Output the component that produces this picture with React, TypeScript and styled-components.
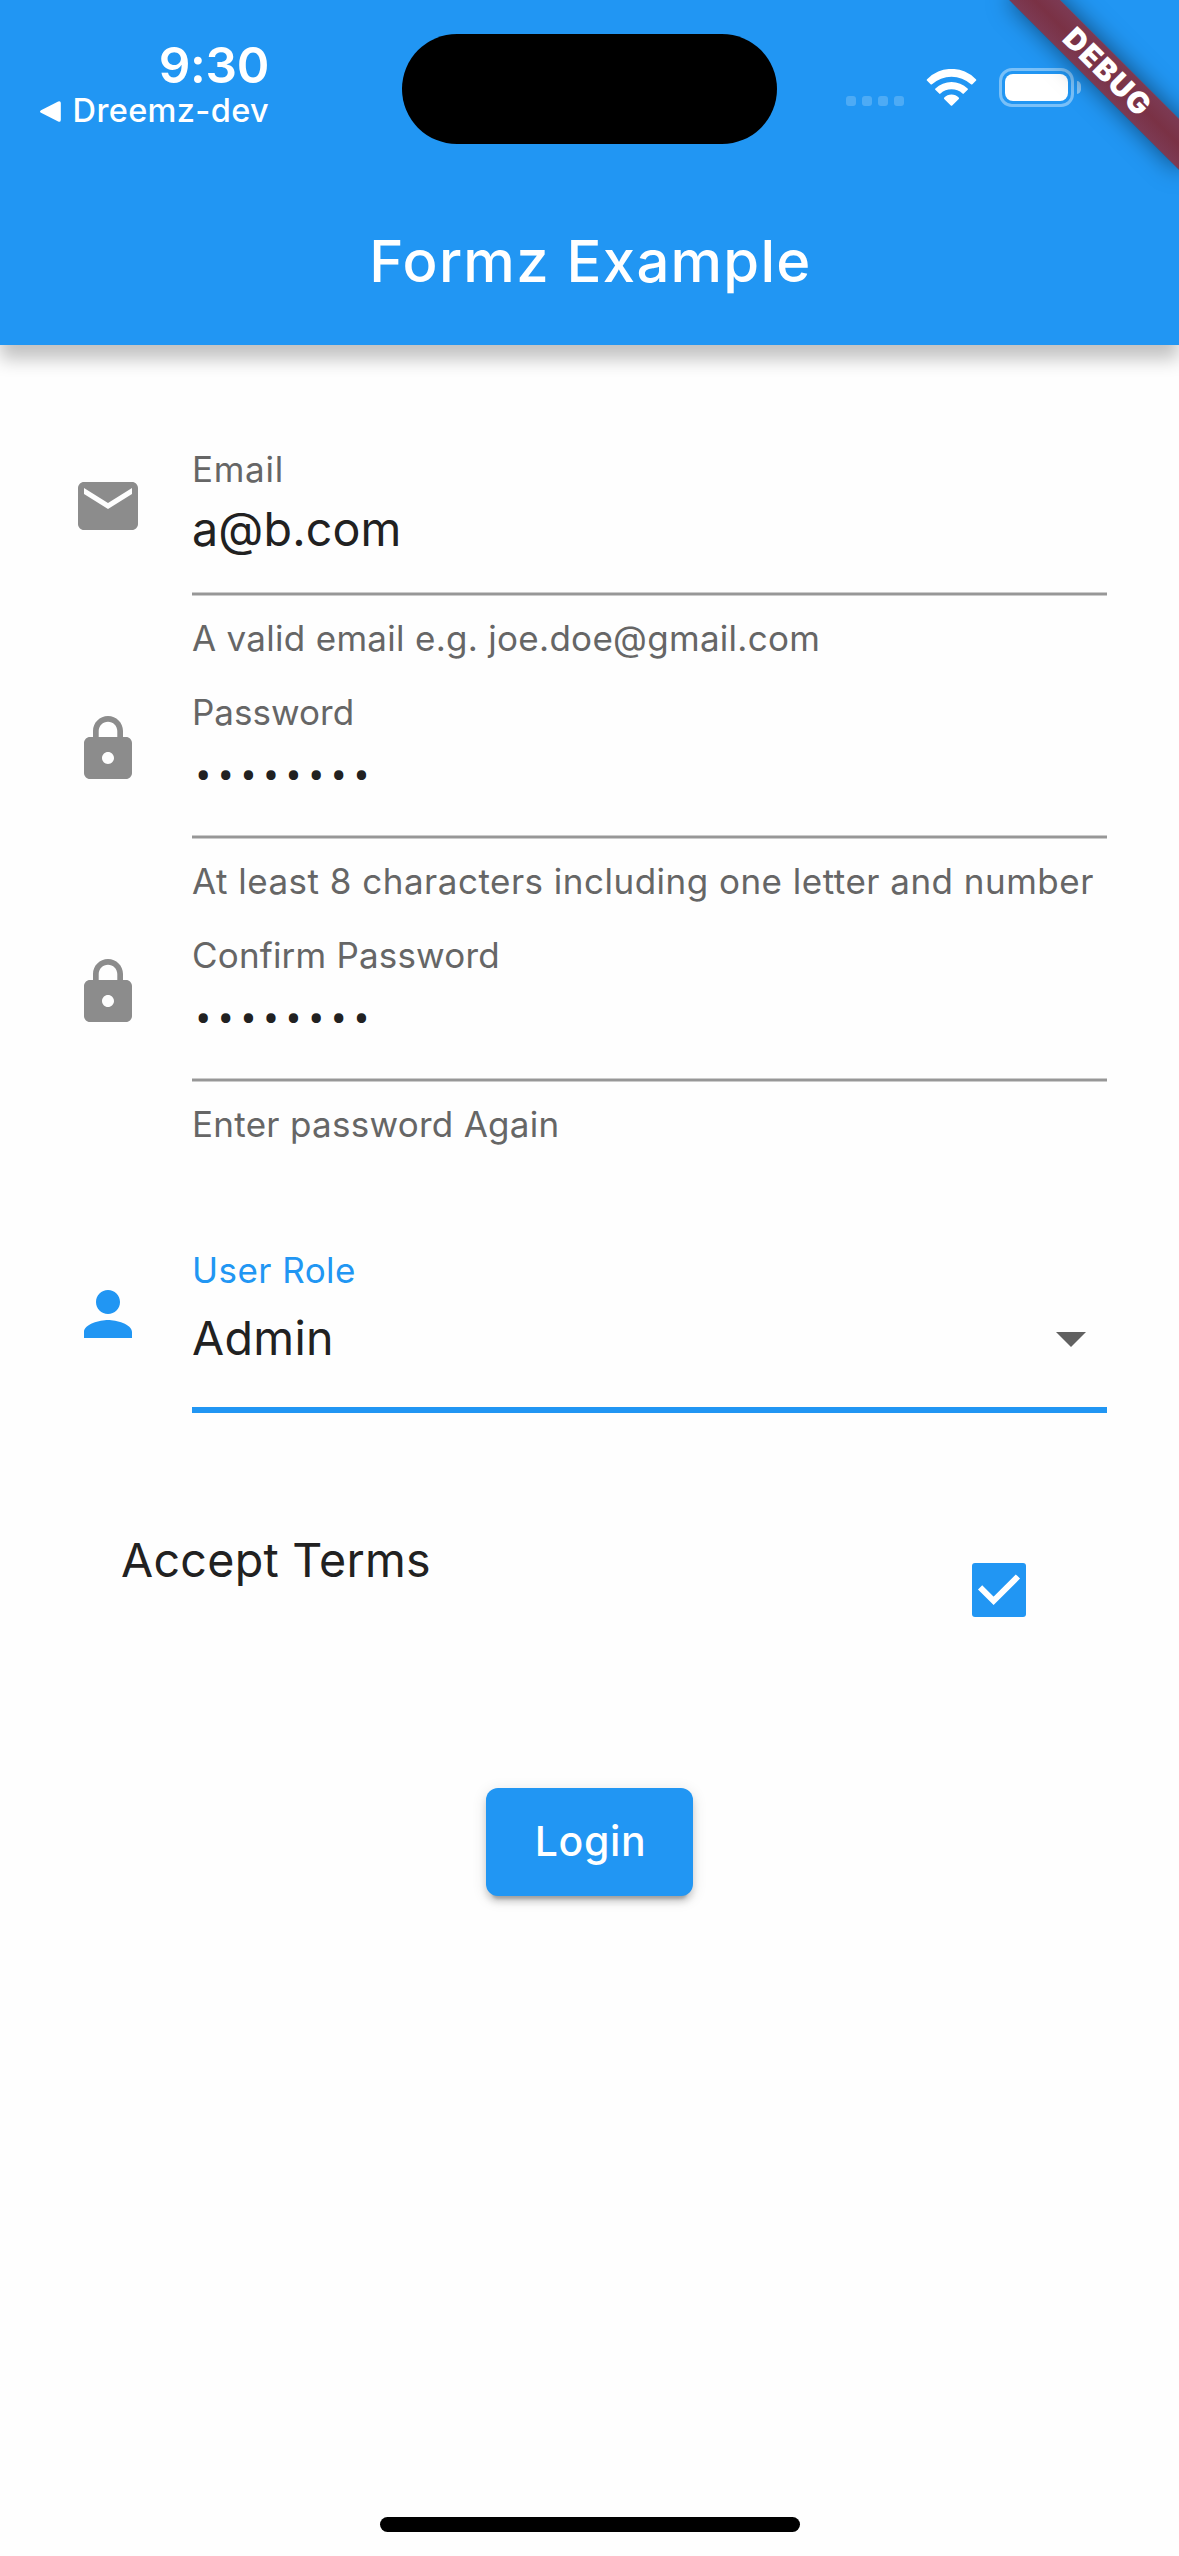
import React from "react";
import styled, { createGlobalStyle, css } from "styled-components";

const BLUE = "#2196f3";
const FONT = `Inter, "Liberation Sans", sans-serif`;

const GlobalStyle = createGlobalStyle`
  * { box-sizing: border-box; }
  body { margin: 0; background: #fefefe; }
`;

const Screen = styled.div`
  position: relative;
  display: flex;
  flex-direction: column;
  width: 1179px;
  height: 2556px;
  overflow: hidden;
  background: #fefefe;
  color: #212121;
  font-family: ${FONT};
`;

const Header = styled.header`
  flex: none;
  height: 345px;
  background: ${BLUE};
  color: #fff;
  box-shadow: 0 14px 17px rgba(0, 0, 0, 0.24);
`;

const StatusBar = styled.div`
  display: flex;
  height: 177px;
`;

const StatusLeft = styled.div`
  display: flex;
  flex-direction: column;
  align-items: flex-end;
  width: 269px;
  margin-right: 133px;
  padding-top: 45px;
`;

const Clock = styled.div`
  font-size: 49.5px;
  font-weight: 600;
  line-height: 40px;
  letter-spacing: -0.31px;
`;

const BackLink = styled.div`
  display: flex;
  align-items: center;
  gap: 12px;
  margin-top: 10px;
  font-size: 32.5px;
  font-weight: 500;
  line-height: 32px;
  letter-spacing: 0.35px;
  white-space: nowrap;
`;

const Island = styled.div`
  flex: none;
  width: 375px;
  height: 110px;
  margin-top: 34px;
  border-radius: 55px;
  background: #000;
`;

const StatusRight = styled.div`
  display: flex;
  align-items: flex-end;
  height: 107px;
  padding-left: 69px;
`;

const CellDots = styled.div`
  display: flex;
  gap: 6px;
  margin: 0 22px 1px 0;
`;

const CellDot = styled.span`
  width: 10px;
  height: 10px;
  border-radius: 3px;
  background: rgba(255, 255, 255, 0.2);
`;

const WifiIcon = styled.svg`
  width: 51px;
  height: 37px;
  margin: 0 22px 1px 0;
`;

const BatteryShell = styled.div`
  width: 75px;
  height: 39px;
  padding: 3px;
  border: 3px solid rgba(255, 255, 255, 0.4);
  border-radius: 13px;
`;

const BatteryCharge = styled.div`
  height: 27px;
  border-radius: 8px;
  background: #fff;
`;

const BatteryTip = styled.div`
  width: 4px;
  height: 13px;
  margin: 0 0 13px 3px;
  border-radius: 0 5px 5px 0 / 0 6px 6px 0;
  background: rgba(255, 255, 255, 0.45);
`;

const Title = styled.h1`
  display: flex;
  align-items: center;
  justify-content: center;
  height: 168px;
  margin: 0;
  padding-left: 2px;
  font-size: 58px;
  font-weight: 500;
  letter-spacing: 1.27px;
`;

const RibbonCorner = styled.div`
  position: absolute;
  top: 0;
  right: 0;
  width: 260px;
  height: 260px;
  overflow: hidden;
`;

const Ribbon = styled.div`
  position: absolute;
  top: 84px;
  left: 140px;
  display: flex;
  align-items: center;
  justify-content: center;
  width: 240px;
  height: 36px;
  padding: 0 0 3px 1px;
  transform: rotate(45deg);
  transform-origin: 120px -84px;
  background: linear-gradient(rgba(183, 28, 28, 0.627), rgba(183, 28, 28, 0.627)),
    linear-gradient(rgba(0, 0, 0, 0.27), rgba(0, 0, 0, 0.43), rgba(0, 0, 0, 0.27));
  box-shadow: 0 0 24px rgba(0, 0, 0, 0.5);
  color: #fff;
  font-size: 29.7px;
  font-weight: 900;
  line-height: 30px;
  letter-spacing: 1.5px;
`;

const Form = styled.main`
  display: flex;
  flex: 1;
  flex-direction: column;
  padding-top: 106px;
`;

const FieldRow = styled.div<{ $tall?: boolean }>`
  display: grid;
  grid-template-columns: 72px 915px;
  column-gap: 48px;
  align-items: start;
  height: ${(p) => (p.$tall ? "162px" : "243px")};
  margin-top: ${(p) => (p.$tall ? "72px" : "0")};
  padding-left: 72px;
`;

const FieldIcon = styled.svg<{ $active?: boolean }>`
  width: 72px;
  height: 72px;
  margin-top: ${(p) => (p.$active ? "26px" : "19px")};
  fill: ${(p) => (p.$active ? BLUE : "#8c8c8c")};
`;

const FieldBody = styled.div`
  display: flex;
  flex-direction: column;
`;

const captionText = css`
  font-size: 35px;
  line-height: 36px;
  white-space: nowrap;
`;

const Label = styled.label<{ $active?: boolean; $spacing: number }>`
  ${captionText}
  color: ${(p) => (p.$active ? BLUE : "#666")};
  letter-spacing: ${(p) => p.$spacing}px;
`;

const Helper = styled.div<{ $spacing: number }>`
  ${captionText}
  margin-top: 24px;
  color: #666;
  letter-spacing: ${(p) => p.$spacing}px;
`;

const Value = styled.div`
  height: 56px;
  margin-top: 14px;
  font-size: 46.6px;
  line-height: 56px;
  letter-spacing: 0.15px;
`;

const Secret = styled.div`
  height: 56px;
  margin-top: 14px;
  padding-left: 3.5px;
  font-family: Roboto, sans-serif;
  font-size: 46px;
  line-height: 64px;
  letter-spacing: 7.07px;
`;

const Underline = styled.div`
  height: 4px;
  margin-top: 35px;
  border: solid #cbcbcb;
  border-width: 1px 0;
  background: #979797;
`;

const ActiveUnderline = styled.div`
  height: 6px;
  margin-top: 41px;
  background: ${BLUE};
`;

const Select = styled.div`
  display: flex;
  align-items: center;
  justify-content: space-between;
  height: 56px;
  margin-top: 22px;
  font-size: 46.6px;
  line-height: 56px;
  letter-spacing: 0.31px;
`;

const Caret = styled.svg`
  width: 72px;
  height: 72px;
  fill: #616161;
`;

const TermsRow = styled.div`
  display: flex;
  align-items: flex-start;
  justify-content: space-between;
  margin-top: 118px;
  padding: 0 153px 0 121px;
`;

const TermsText = styled.span`
  font-size: 46.6px;
  line-height: 56px;
  letter-spacing: 0.27px;
`;

const Checkbox = styled.div`
  width: 54px;
  height: 54px;
  margin-top: 31px;
  border-radius: 3px;
  background: ${BLUE};

  svg {
    display: block;
    fill: none;
    stroke: #fff;
    stroke-width: 6px;
  }
`;

const LoginButton = styled.button`
  align-self: center;
  width: 207px;
  height: 108px;
  margin-top: 171px;
  padding: 0 0 2px 2px;
  border: 0;
  border-radius: 12px;
  background: ${BLUE};
  box-shadow: 0 9px 3px -6px rgba(0, 0, 0, 0.2), 0 6px 6px rgba(0, 0, 0, 0.14),
    0 3px 15px rgba(0, 0, 0, 0.12);
  color: #fff;
  font: 500 41px ${FONT};
  letter-spacing: 0.6px;
`;

const HomeIndicator = styled.div`
  flex: none;
  align-self: center;
  width: 420px;
  height: 15px;
  margin-bottom: 24px;
  margin-left: 1px;
  border-radius: 8px;
  background: #000;
`;

const ICONS = {
  mail: "M20 4H4c-1.1 0-1.99.9-1.99 2L2 18c0 1.1.9 2 2 2h16c1.1 0 2-.9 2-2V6c0-1.1-.9-2-2-2zm0 4l-8 5-8-5V6l8 5 8-5v2z",
  lock: "M18 8h-1V6c0-2.76-2.24-5-5-5S7 3.24 7 6v2H6c-1.1 0-2 .9-2 2v10c0 1.1.9 2 2 2h12c1.1 0 2-.9 2-2V10c0-1.1-.9-2-2-2zm-6 9c-1.1 0-2-.9-2-2s.9-2 2-2 2 .9 2 2-.9 2-2 2zm3.1-9H8.9V6c0-1.71 1.39-3.1 3.1-3.1 1.71 0 3.1 1.39 3.1 3.1v2z",
  person:
    "M12 12c2.21 0 4-1.79 4-4s-1.79-4-4-4-4 1.79-4 4 1.79 4 4 4zm0 2c-2.67 0-8 1.34-8 4v2h16v-2c0-2.66-5.33-4-8-4z",
};

type Field = {
  icon: keyof typeof ICONS;
  label: string;
  labelSpacing: number;
  value: string;
  secret?: boolean;
  helper: string;
  helperSpacing: number;
};

const FIELDS: Field[] = [
  {
    icon: "mail",
    label: "Email",
    labelSpacing: 0.7,
    value: "a@b.com",
    helper: "A valid email e.g. joe.doe@gmail.com",
    helperSpacing: 0.29,
  },
  {
    icon: "lock",
    label: "Password",
    labelSpacing: 0.02,
    value: "••••••••",
    secret: true,
    helper: "At least 8 characters including one letter and number",
    helperSpacing: 0.49,
  },
  {
    icon: "lock",
    label: "Confirm Password",
    labelSpacing: 0.19,
    value: "••••••••",
    secret: true,
    helper: "Enter password Again",
    helperSpacing: 0.28,
  },
];

export default function App() {
  return (
    <Screen>
      <GlobalStyle />
      <Header>
        <StatusBar>
          <StatusLeft>
            <Clock>9:30</Clock>
            <BackLink>
              <svg width="21" height="21" viewBox="0 0 21 21" fill="#fff">
                <path d="M1 9.2 18.2.4Q20.7-.5 20.8 2v17q-.1 2.500-2.600 1.600L1 11.800Q-1 10.500 1 9.200Z" />
              </svg>
              Dreemz-dev
            </BackLink>
          </StatusLeft>
          <Island />
          <StatusRight>
            <CellDots>
              <CellDot />
              <CellDot />
              <CellDot />
              <CellDot />
            </CellDots>
            <WifiIcon viewBox="-0.5 0 51 37" fill="#fff">
              <path d="M.4 11.600Q-.2 11 .6 10.300A33.800 33.800 0 0 1 49.400 10.300Q50.200 11 49.600 11.600L45.900 15.300Q45.200 15.900 44.500 15.300A29 29 0 0 0 5.500 15.300Q4.800 15.900 4.100 15.300Z" />
              <path d="M8.800 20.700Q8.200 20 8.900 19.400A23.700 23.700 0 0 1 41.100 19.400Q41.800 20 41.200 20.700L37.300 24.600Q36.700 25.200 36 24.500A16.700 16.700 0 0 0 14 24.500Q13.300 25.200 12.700 24.600Z" />
              <path d="M17.800 28.600A9.700 9.700 0 0 1 32.200 28.600Q32.900 29.300 32.300 30L25.700 36.500Q25 37.200 24.300 36.500L17.700 30Q17.100 29.300 17.800 28.600Z" />
            </WifiIcon>
            <BatteryShell>
              <BatteryCharge />
            </BatteryShell>
            <BatteryTip />
          </StatusRight>
        </StatusBar>
        <Title>Formz Example</Title>
      </Header>

      <Form>
        {FIELDS.map((f) => (
          <FieldRow key={f.label}>
            <FieldIcon viewBox="0 0 24 24">
              <path d={ICONS[f.icon]} />
            </FieldIcon>
            <FieldBody>
              <Label $spacing={f.labelSpacing}>{f.label}</Label>
              {f.secret ? <Secret>{f.value}</Secret> : <Value>{f.value}</Value>}
              <Underline />
              <Helper $spacing={f.helperSpacing}>{f.helper}</Helper>
            </FieldBody>
          </FieldRow>
        ))}

        <FieldRow $tall>
          <FieldIcon $active viewBox="0 0 24 24">
            <path d={ICONS.person} />
          </FieldIcon>
          <FieldBody>
            <Label $active $spacing={0.45}>
              User Role
            </Label>
            <Select>
              Admin
              <Caret viewBox="0 0 24 24">
                <path d="M7 10l5 5 5-5z" />
              </Caret>
            </Select>
            <ActiveUnderline />
          </FieldBody>
        </FieldRow>

        <TermsRow>
          <TermsText>Accept Terms</TermsText>
          <Checkbox role="checkbox" aria-checked="true">
            <svg width="54" height="54" viewBox="0 0 54 54">
              <path d="M8.100 24.300 21.600 37.800 45.900 13.500" />
            </svg>
          </Checkbox>
        </TermsRow>

        <LoginButton type="button">Login</LoginButton>
      </Form>

      <HomeIndicator />

      <RibbonCorner>
        <Ribbon>DEBUG</Ribbon>
      </RibbonCorner>
    </Screen>
  );
}
